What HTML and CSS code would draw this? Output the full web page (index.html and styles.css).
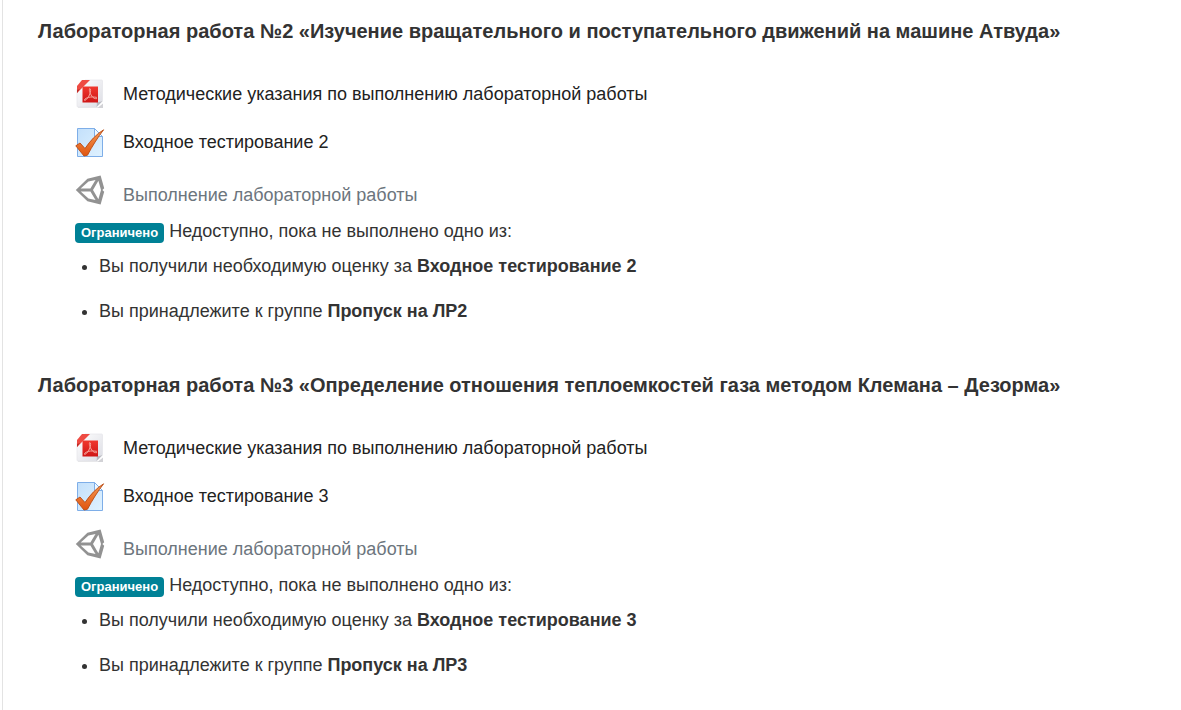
FILE: index.html
```html
<!DOCTYPE html>
<html lang="ru">

<head>
    <meta charset="UTF-8">
    <meta name="viewport" content="width=device-width, initial-scale=1.0">
    <title>Лабораторные работы</title>
    <link rel="stylesheet" href="styles.css">
</head>

<body>

    <!-- Общие иконки -->
    <svg class="sprite" aria-hidden="true">
        <defs>
            <linearGradient id="paper" x1="0" y1="0" x2="1" y2="1">
                <stop offset="0" stop-color="#ffffff" />
                <stop offset="1" stop-color="#dcdde4" />
            </linearGradient>
            <linearGradient id="red" x1="0" y1="0" x2="0" y2="1">
                <stop offset="0" stop-color="#f0382e" />
                <stop offset="1" stop-color="#cf1616" />
            </linearGradient>
            <linearGradient id="sheet" x1="0" y1="0" x2="1" y2="1">
                <stop offset="0" stop-color="#c3e0fb" />
                <stop offset="1" stop-color="#e0f2ff" />
            </linearGradient>
            <linearGradient id="tick" x1="0" y1="0" x2="0" y2="1">
                <stop offset="0" stop-color="#f59a55" />
                <stop offset="1" stop-color="#e0540f" />
            </linearGradient>
        </defs>
        <symbol id="icon-pdf" viewBox="0 0 30 30">
            <path d="M3 28.500h20l5-4v4.500H3z" fill="#d2d2d6" />
            <path d="M10 1h16.500q1 0 1 1v20l-6 6H3q-1 0-1-1V10z" fill="url(#paper)" stroke="#e2e2e8" stroke-width=".6" />
            <path d="M27.500 22l-6 6q1-3 0-5 3 .5 6-1z" fill="#b9bac1" />
            <path d="M7 1h8L2 14V7z" fill="#ee4b43" />
            <path d="M2 11l3-1-3 4z" fill="#bd2a25" />
            <path d="M7.500 7.500h15.500v16H7.500z" fill="url(#red)" />
            <path d="M15 9.500c1.200 0 .6 3.500-.2 5.500-1 2.800-3 6-5 6.500M14.700 9.500c-1.300.5.300 5 2 7.500 1.500 2 3.200 3 4.800 2.700M9.500 20.500c1.500-2 6-3.200 12-2.200" fill="none" stroke="#f6a49b" stroke-width="1" stroke-linecap="round" />
        </symbol>
        <symbol id="icon-quiz" viewBox="0 0 30 30">
            <path d="M2.500 1.500h17l8 8v20h-25z" fill="url(#sheet)" stroke="#7eaee8" />
            <path d="M19.500 1.500v8h8z" fill="#f1f9ff" stroke="#7eaee8" />
            <path d="M.8 18.800l4.200-2.800 5 5.500C15.500 13.500 21 7.500 28.600 2.800 23 10 17 19.500 12.500 28.200L9 29z" fill="url(#tick)" stroke="#b84a12" stroke-width=".9" stroke-linejoin="round" />
        </symbol>
        <symbol id="icon-unity" viewBox="0 0 30 30">
            <path fill-rule="evenodd" fill="#929292" d="M.8 15L12.400 3.700 25.600.6 29.200 13.300 27.400 15 29.200 16.700 25.600 29.400 12.400 26.300zM5.700 13.500H15.400L20.500 5 13.500 6.500zM5.700 16.500L13.500 23.500 20.500 25 15.400 16.500zM18 15L23.400 24.300 26 15 23.400 5.700z" />
        </symbol>
    </svg>

    <main class="course">
        <section class="topic">
            <h3>Лабораторная работа №2 «Изучение вращательного и поступательного движений на машине Атвуда»</h3>
            <div class="topic-content">
                <a class="activity" href="#">
                    <svg class="icon" aria-hidden="true"><use href="#icon-pdf" /></svg>
                    <span>Методические указания по выполнению лабораторной работы</span>
                </a>
                <a class="activity" href="#">
                    <svg class="icon" aria-hidden="true"><use href="#icon-quiz" /></svg>
                    <span>Входное тестирование 2</span>
                </a>
                <div class="activity dimmed">
                    <svg class="icon" aria-hidden="true"><use href="#icon-unity" /></svg>
                    <span>Выполнение лабораторной работы</span>
                </div>
                <div class="availability">
                    <span class="badge">Ограничено</span> Недоступно, пока не выполнено одно из:
                    <ul>
                        <li>Вы получили необходимую оценку за <strong>Входное тестирование 2</strong></li>
                        <li>Вы принадлежите к группе <strong>Пропуск на ЛР2</strong></li>
                    </ul>
                </div>
            </div>
        </section>

        <section class="topic">
            <h3>Лабораторная работа №3 «Определение отношения теплоемкостей газа методом Клемана – Дезорма»</h3>
            <div class="topic-content">
                <a class="activity" href="#">
                    <svg class="icon" aria-hidden="true"><use href="#icon-pdf" /></svg>
                    <span>Методические указания по выполнению лабораторной работы</span>
                </a>
                <a class="activity" href="#">
                    <svg class="icon" aria-hidden="true"><use href="#icon-quiz" /></svg>
                    <span>Входное тестирование 3</span>
                </a>
                <div class="activity dimmed">
                    <svg class="icon" aria-hidden="true"><use href="#icon-unity" /></svg>
                    <span>Выполнение лабораторной работы</span>
                </div>
                <div class="availability">
                    <span class="badge">Ограничено</span> Недоступно, пока не выполнено одно из:
                    <ul>
                        <li>Вы получили необходимую оценку за <strong>Входное тестирование 3</strong></li>
                        <li>Вы принадлежите к группе <strong>Пропуск на ЛР3</strong></li>
                    </ul>
                </div>
            </div>
        </section>
    </main>

</body>

</html>
```
FILE: styles.css
```css
body {
    margin: 0;
    font-family: "Liberation Sans", Arial, sans-serif;
    font-size: 18px;
    line-height: 27px;
    color: #333;
    background-color: #fff;
}

/* не display: none, иначе пропадают градиенты */
.sprite {
    display: block;
    width: 0;
    height: 0;
}

.course {
    box-sizing: border-box;
    min-height: 100vh;
    margin-left: 2px;
    padding: 16px 35px 0;
    border-left: 1px solid #e3e3e3;
}

.topic {
    margin-bottom: 45px;
}

.topic:last-child {
    margin-bottom: 0;
}

.topic h3 {
    margin: 0 0 24px;
    font-size: 20px;
    line-height: 30px;
}

.topic-content {
    padding-left: 37px;
}

.activity {
    display: flex;
    align-items: center;
    gap: 18px;
    padding: 9px 0;
    color: #222;
    text-decoration: none;
}

.activity:hover {
    text-decoration: underline;
}

.icon {
    flex: none;
    width: 30px;
    height: 30px;
}

.dimmed {
    align-items: flex-start;
    color: #6c757d;
}

.dimmed span {
    padding-top: 7px;
}

.dimmed:hover {
    text-decoration: none;
}

.badge {
    display: inline-block;
    padding: 3px 6px;
    border-radius: 4px;
    background-color: #008196;
    color: #fff;
    font-size: 13px;
    font-weight: bold;
    line-height: 14px;
}

.availability ul {
    margin: 8px 0 0;
    padding-left: 24px;
}

.availability li + li {
    margin-top: 18px;
}
```
